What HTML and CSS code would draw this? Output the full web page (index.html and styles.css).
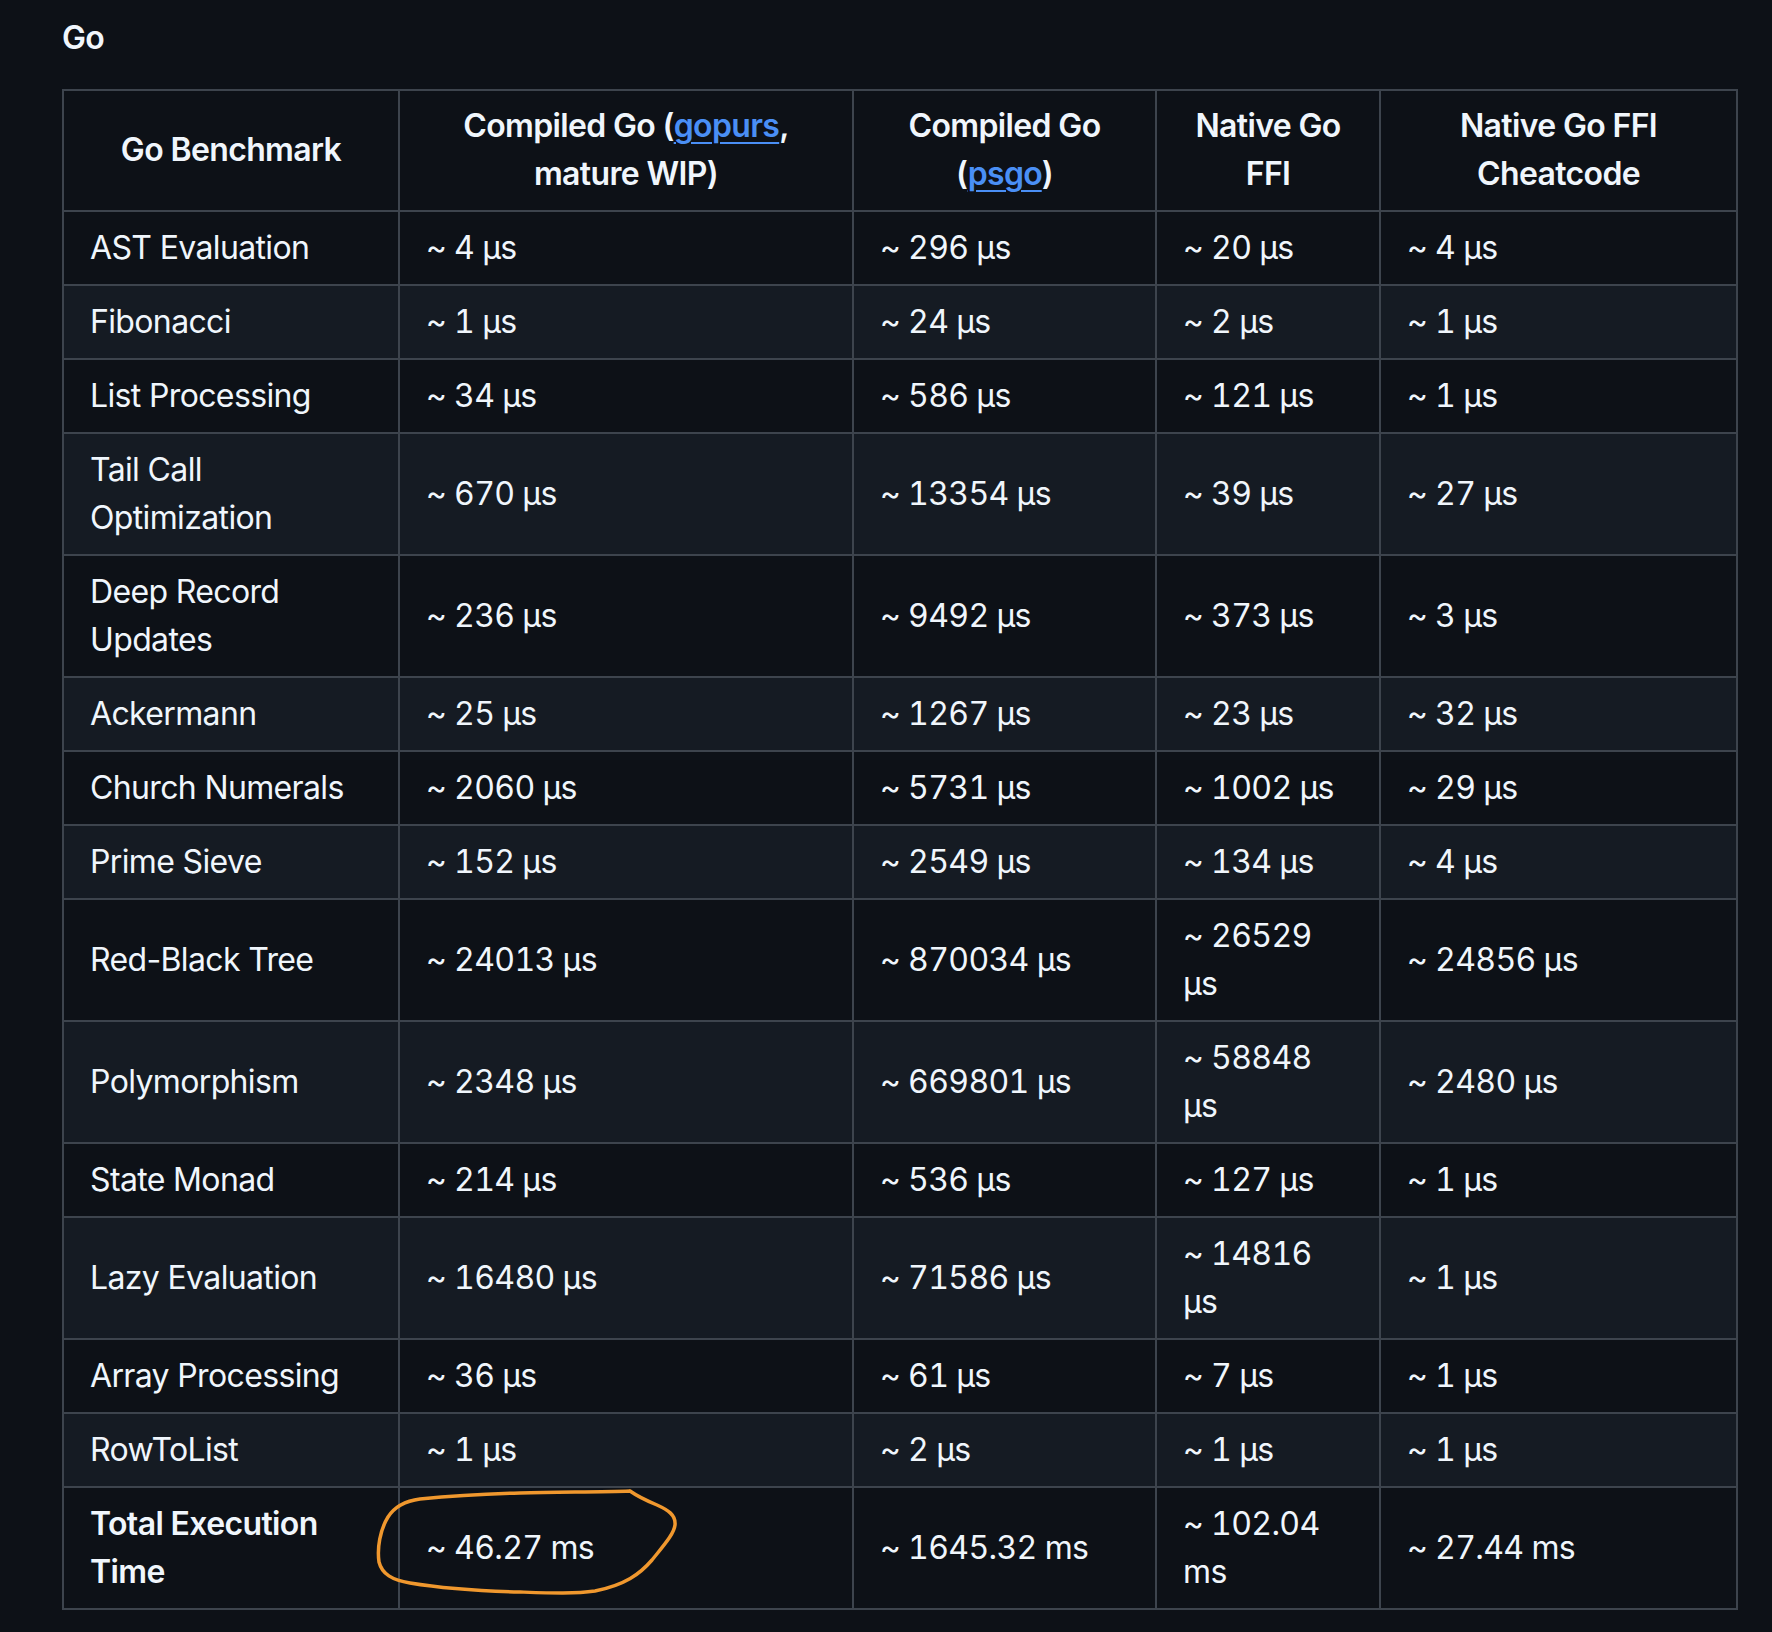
FILE: index.html
```html
<!DOCTYPE html>
<html lang="en">
<head>
<meta charset="utf-8">
<title>Go Benchmarks</title>
<link rel="stylesheet" href="styles.css">
</head>
<body>
<main class="page">
  <h4 class="heading">Go</h4>
  <table class="bench">
    <colgroup>
      <col class="col-name">
      <col class="col-gopurs">
      <col class="col-psgo">
      <col class="col-ffi">
      <col class="col-cheat">
    </colgroup>
    <thead>
      <tr>
        <th>Go Benchmark</th>
        <th>Compiled Go (<a href="#">gopurs</a>, mature WIP)</th>
        <th>Compiled Go (<a href="#">psgo</a>)</th>
        <th>Native Go FFI</th>
        <th>Native Go FFI Cheatcode</th>
      </tr>
    </thead>
    <tbody>
      <tr><td>AST Evaluation</td><td>~ 4 µs</td><td>~ 296 µs</td><td>~ 20 µs</td><td>~ 4 µs</td></tr>
      <tr><td>Fibonacci</td><td>~ 1 µs</td><td>~ 24 µs</td><td>~ 2 µs</td><td>~ 1 µs</td></tr>
      <tr><td>List Processing</td><td>~ 34 µs</td><td>~ 586 µs</td><td>~ 121 µs</td><td>~ 1 µs</td></tr>
      <tr><td>Tail Call Optimization</td><td>~ 670 µs</td><td>~ 13354 µs</td><td>~ 39 µs</td><td>~ 27 µs</td></tr>
      <tr><td>Deep Record Updates</td><td>~ 236 µs</td><td>~ 9492 µs</td><td>~ 373 µs</td><td>~ 3 µs</td></tr>
      <tr><td>Ackermann</td><td>~ 25 µs</td><td>~ 1267 µs</td><td>~ 23 µs</td><td>~ 32 µs</td></tr>
      <tr><td>Church Numerals</td><td>~ 2060 µs</td><td>~ 5731 µs</td><td>~ 1002 µs</td><td>~ 29 µs</td></tr>
      <tr><td>Prime Sieve</td><td>~ 152 µs</td><td>~ 2549 µs</td><td>~ 134 µs</td><td>~ 4 µs</td></tr>
      <tr><td>Red-Black Tree</td><td>~ 24013 µs</td><td>~ 870034 µs</td><td>~ 26529 µs</td><td>~ 24856 µs</td></tr>
      <tr><td>Polymorphism</td><td>~ 2348 µs</td><td>~ 669801 µs</td><td>~ 58848 µs</td><td>~ 2480 µs</td></tr>
      <tr><td>State Monad</td><td>~ 214 µs</td><td>~ 536 µs</td><td>~ 127 µs</td><td>~ 1 µs</td></tr>
      <tr><td>Lazy Evaluation</td><td>~ 16480 µs</td><td>~ 71586 µs</td><td>~ 14816 µs</td><td>~ 1 µs</td></tr>
      <tr><td>Array Processing</td><td>~ 36 µs</td><td>~ 61 µs</td><td>~ 7 µs</td><td>~ 1 µs</td></tr>
      <tr><td>RowToList</td><td>~ 1 µs</td><td>~ 2 µs</td><td>~ 1 µs</td><td>~ 1 µs</td></tr>
      <tr><td><strong>Total Execution Time</strong></td><td>~ 46.27 ms</td><td>~ 1645.32 ms</td><td>~ 102.04 ms</td><td>~ 27.44 ms</td></tr>
    </tbody>
  </table>
</main>
<svg class="annotation" width="1772" height="1632" viewBox="0 0 1772 1632" aria-hidden="true">
  <path d="M630 1491 C600 1492 560 1492 520 1493 C480 1494 440 1497 420 1499 C405 1501 395 1506 388 1517 C380 1530 377 1548 379 1562 C382 1574 392 1580 410 1583 C440 1588 480 1591 520 1592 C550 1593 575 1594 595 1591 C625 1585 640 1574 652 1560 C664 1545 674 1534 675 1525 C676 1515 668 1510 657 1505 C645 1500 637 1496 630 1491"
        fill="none" stroke="#f0982e" stroke-width="3.5" stroke-linecap="round" stroke-linejoin="round"/>
</svg>
</body>
</html>
```

FILE: styles.css
```css
html, body {
  margin: 0;
  padding: 0;
  background: #0d1117;
}

body {
  position: relative;
  min-height: 1632px;
  color: #f0f6fc;
  font-family: Inter, "Noto Sans", "Liberation Sans", sans-serif;
  font-size: 32px;
  line-height: 48px;
  letter-spacing: -0.02em;
}

.page {
  padding: 0 0 0 62px;
}

.heading {
  margin: 14px 0 27px;
  font-size: 32px;
  line-height: 48px;
  font-weight: 600;
}

.bench {
  width: 1676px;
  table-layout: fixed;
  border-collapse: collapse;
  border-spacing: 0;
}

.col-name { width: 336px; }
.col-gopurs { width: 454px; }
.col-psgo { width: 303px; }
.col-ffi { width: 224px; }
.col-cheat { width: 357px; }

.bench th,
.bench td {
  border: 2px solid #3d444d;
  padding: 12px 26px;
  vertical-align: middle;
}

.bench th {
  font-weight: 600;
  text-align: center;
  padding-top: 11px;
  padding-bottom: 12px;
}

.bench td {
  text-align: left;
}

.bench td + td {
  font-variant-numeric: tabular-nums;
}

.bench td:nth-child(4) {
  padding-right: 40px;
}

.bench thead tr,
.bench tbody tr:nth-child(odd) {
  background: #0d1117;
}

.bench tbody tr:nth-child(even) {
  background: #151b23;
}

.bench a {
  color: #4a8ff5;
  text-decoration: underline;
  text-underline-offset: 5px;
  text-decoration-thickness: 2px;
}

.bench strong {
  font-weight: 600;
}

.annotation {
  position: absolute;
  top: 0;
  left: 0;
  pointer-events: none;
}
```
